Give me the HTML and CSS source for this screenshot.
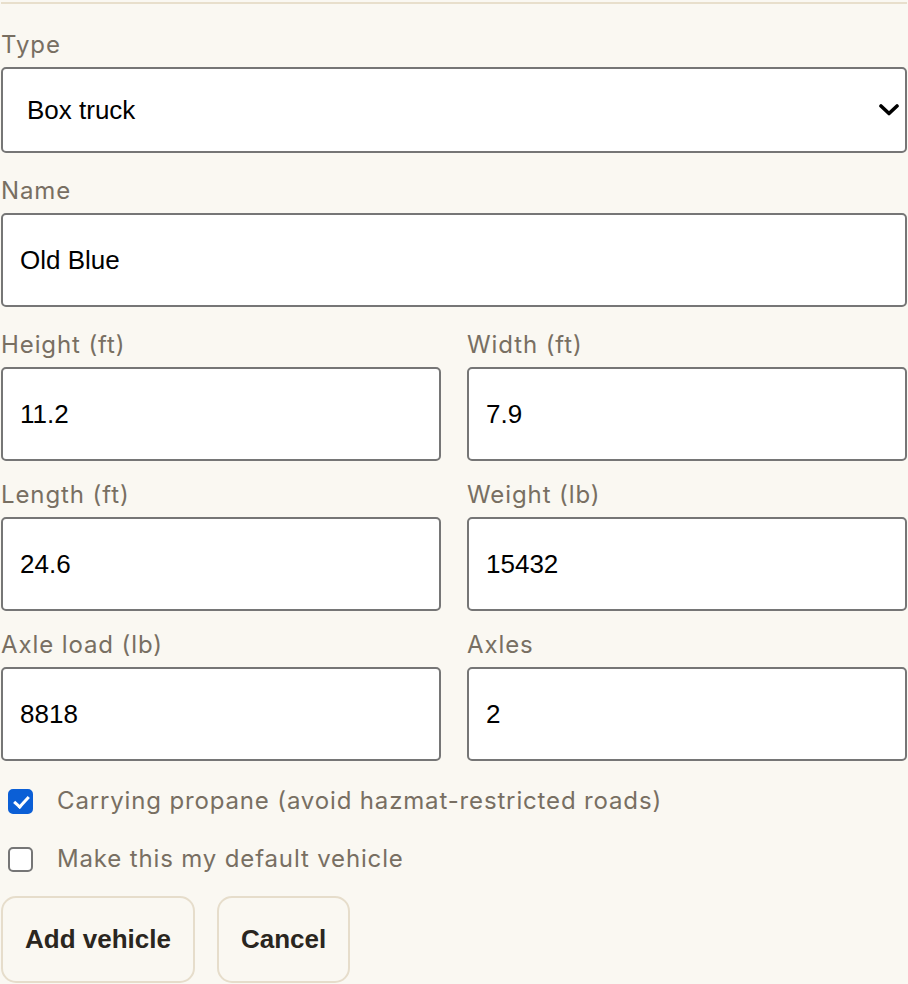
FILE: index.html
```html
<!DOCTYPE html>
<html lang="en">
<head>
    <meta charset="UTF-8">
    <meta name="viewport" content="width=device-width, initial-scale=1.0">
    <title>Add vehicle</title>
    <link rel="stylesheet" href="styles.css">
</head>
<body>
    <form class="vehicle-form">
        <div class="field">
            <label for="type">Type</label>
            <div class="select-wrap">
                <select id="type" name="type">
                    <option>Box truck</option>
                    <option>Semi trailer</option>
                    <option>Van</option>
                    <option>Pickup</option>
                </select>
                <svg class="select-arrow" width="20" height="12" viewBox="0 0 20 12">
                    <path d="M2 2 L10 9.5 L18 2" fill="none" stroke="#000" stroke-width="3.6" stroke-linecap="round" stroke-linejoin="round"/>
                </svg>
            </div>
        </div>

        <div class="field">
            <label for="name">Name</label>
            <input type="text" id="name" name="name" value="Old Blue">
        </div>

        <div class="grid">
            <div class="field">
                <label for="height">Height (ft)</label>
                <input type="text" id="height" name="height" value="11.2">
            </div>
            <div class="field">
                <label for="width">Width (ft)</label>
                <input type="text" id="width" name="width" value="7.9">
            </div>
            <div class="field">
                <label for="length">Length (ft)</label>
                <input type="text" id="length" name="length" value="24.6">
            </div>
            <div class="field">
                <label for="weight">Weight (lb)</label>
                <input type="text" id="weight" name="weight" value="15432">
            </div>
            <div class="field">
                <label for="axle-load">Axle load (lb)</label>
                <input type="text" id="axle-load" name="axle-load" value="8818">
            </div>
            <div class="field">
                <label for="axles">Axles</label>
                <input type="text" id="axles" name="axles" value="2">
            </div>
        </div>

        <label class="check">
            <input type="checkbox" name="propane" checked>
            <span>Carrying propane (avoid hazmat-restricted roads)</span>
        </label>
        <label class="check">
            <input type="checkbox" name="default">
            <span>Make this my default vehicle</span>
        </label>

        <div class="actions">
            <button type="submit">Add vehicle</button>
            <button type="button">Cancel</button>
        </div>
    </form>
</body>
</html>
```

FILE: styles.css
```css
body {
    margin: 0;
    padding: 2px 1px 0 1px;
    background-color: #faf8f2;
    font-family: Inter, "Noto Sans", sans-serif;
}

.vehicle-form {
    border-top: 2px solid #e8dfcc;
    padding-top: 27px;
}

.field {
    margin-bottom: 24px;
}

.field label {
    display: block;
    font-size: 24px;
    line-height: 28px;
    letter-spacing: 0.9px;
    color: #786f62;
    margin-bottom: 8px;
}

input[type="text"], select {
    display: block;
    width: 100%;
    box-sizing: border-box;
    height: 94px;
    padding: 0 17px;
    border: 2px solid #767676;
    border-radius: 5px;
    background-color: white;
    font-family: "Liberation Sans", Arial, sans-serif;
    font-size: 26px;
    color: #000;
}

.select-wrap {
    position: relative;
}

select {
    height: 86px;
    padding: 0 24px;
    appearance: none;
    -webkit-appearance: none;
}

.select-arrow {
    position: absolute;
    right: 8px;
    top: 37px;
    pointer-events: none;
}

.grid {
    display: grid;
    grid-template-columns: 1fr 1fr;
    column-gap: 26px;
    row-gap: 20px;
}

.grid .field {
    margin-bottom: 0;
}

.check {
    display: flex;
    align-items: center;
    gap: 24px;
    margin-top: 26px;
    padding-left: 7px;
    font-size: 24px;
    line-height: 28px;
    letter-spacing: 0.85px;
    color: #786f62;
}

.check + .check {
    margin-top: 30px;
}

.check input {
    appearance: none;
    -webkit-appearance: none;
    width: 25px;
    height: 25px;
    margin: 0;
    border: 2px solid #767676;
    border-radius: 5px;
    background-color: white;
    position: relative;
    flex-shrink: 0;
}

.check input:checked {
    background-color: #0b5fd6;
    border-color: #0b5fd6;
}

.check input:checked::after {
    content: "";
    position: absolute;
    left: 7px;
    top: 2px;
    width: 6px;
    height: 12px;
    border: solid white;
    border-width: 0 3px 3px 0;
    transform: rotate(42deg);
}

.actions {
    display: flex;
    gap: 22px;
    margin-top: 23px;
}

.actions button {
    height: 87px;
    padding: 0 22px;
    border: 2px solid #e6ddcb;
    border-radius: 15px;
    background-color: transparent;
    font-family: "Liberation Sans", Arial, sans-serif;
    font-weight: bold;
    font-size: 26px;
    color: #2a2620;
    cursor: pointer;
}
```
